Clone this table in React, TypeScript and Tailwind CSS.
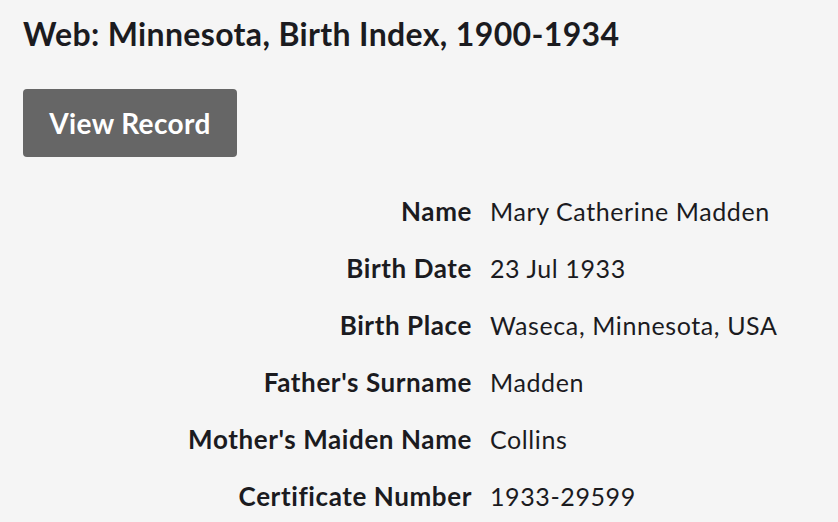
import React from 'react';

const rows = [
  { label: 'Name', value: 'Mary Catherine Madden' },
  { label: 'Birth Date', value: '23 Jul 1933' },
  { label: 'Birth Place', value: 'Waseca, Minnesota, USA' },
  { label: "Father's Surname", value: 'Madden' },
  { label: "Mother's Maiden Name", value: 'Collins' },
  { label: 'Certificate Number', value: '1933-29599' },
];

export default function App() {
  return (
    <div className="min-h-[522px] bg-[#f5f5f5] px-[23px] pt-[14px] text-[#1b1b1f] font-['Lato',sans-serif]">
      <h1 className="text-[32px] font-bold leading-[40px] tracking-[0.35px]">Web: Minnesota, Birth Index, 1900-1934</h1>

      <button className="mt-[35px] h-[68px] w-[214px] rounded-[4px] bg-[#666666] text-[28px] font-bold tracking-[0.4px] text-white">
        View Record
      </button>

      <dl className="mt-[26px] grid grid-cols-[449px_1fr] gap-x-[18px]">
        {rows.map((row) => (
          <React.Fragment key={row.label}>
            <dt className="text-right text-[26px] font-bold leading-[57px] tracking-[0.6px]">{row.label}</dt>
            <dd className="text-[25px] leading-[57px] tracking-[0.6px]">{row.value}</dd>
          </React.Fragment>
        ))}
      </dl>
    </div>
  );
}
